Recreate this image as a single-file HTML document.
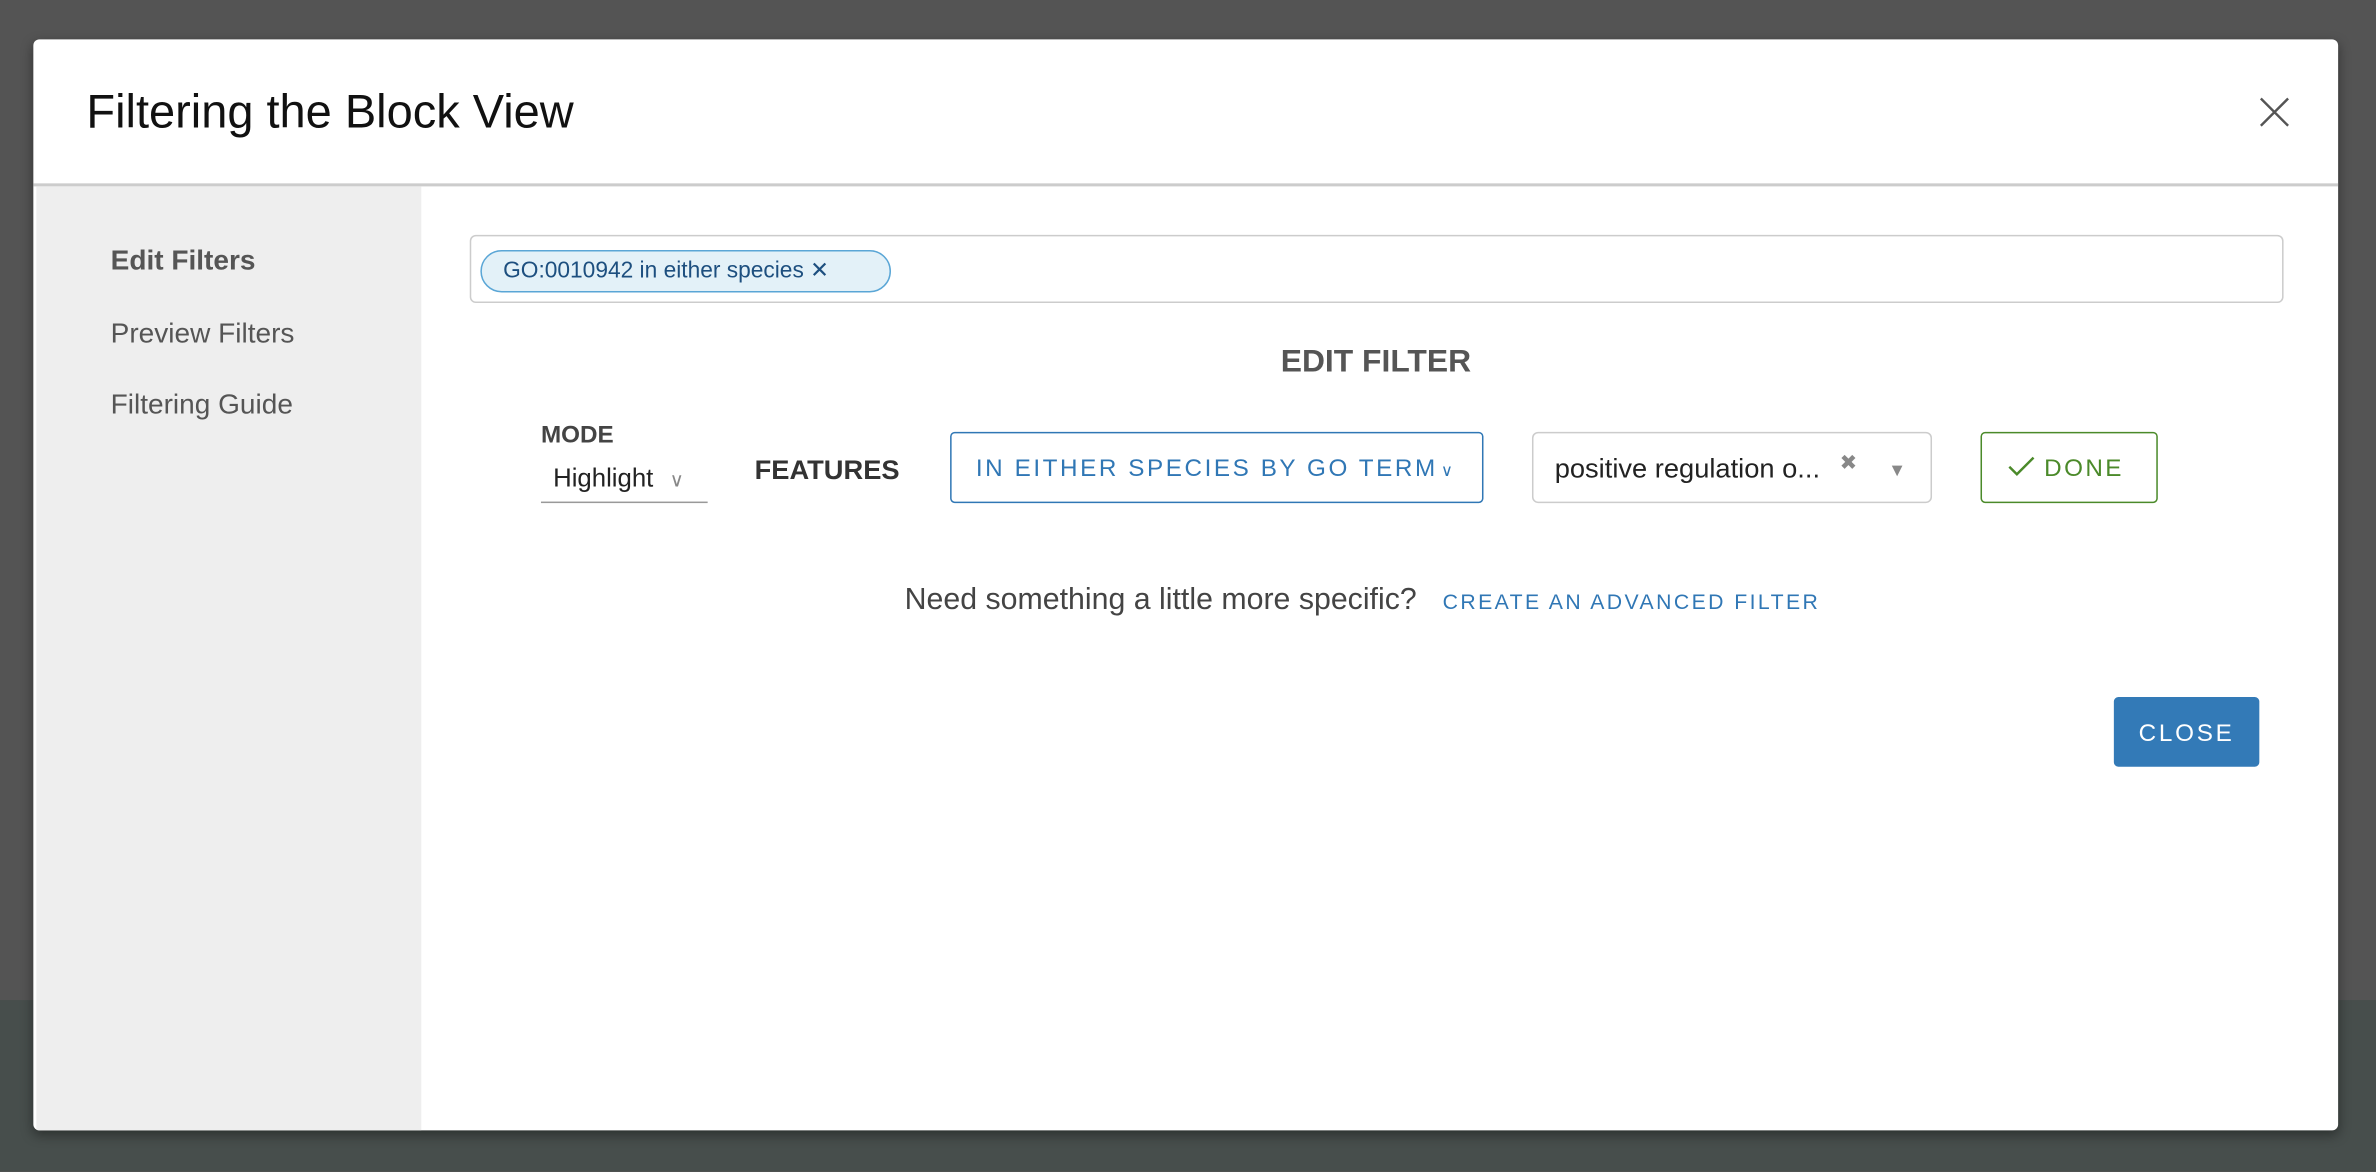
<!DOCTYPE html>
<html><head><meta charset="utf-8"><style>
html,body{margin:0;padding:0;width:2376px;height:1172px;overflow:hidden;background:#545454;font-family:"Liberation Sans",sans-serif}
#w{position:absolute;left:0;top:0;width:1568px;height:773px;transform:scale(1.51531);transform-origin:0 0}
.a{position:absolute}
</style></head><body><div id="w">
<div class="a" style="left:0;top:660px;width:1568px;height:113px;background:#474e4c"></div>
<div class="a" style="left:22px;top:26px;width:1521px;height:720px;background:#fff;border-radius:4px;overflow:hidden;box-shadow:0 3px 8px rgba(0,0,0,.4)">
  <div class="a" style="left:35px;top:30px;font-size:31px;color:#111">Filtering the Block View</div>
  <svg class="a" style="left:1468px;top:37px" width="22" height="22" viewBox="0 0 22 22"><path d="M2 2L20 20M20 2L2 20" stroke="#555" stroke-width="1.6" fill="none"/></svg>
  <div class="a" style="left:0;top:95px;width:1521px;height:2px;background:#ccc"></div>
  <div class="a" style="left:2px;top:97px;width:254px;height:623px;background:#eee"></div>
  <div class="a" style="left:51px;top:135px;font-size:18.5px;color:#555;font-weight:bold">Edit Filters</div>
  <div class="a" style="left:51px;top:183px;font-size:18.5px;color:#555">Preview Filters</div>
  <div class="a" style="left:51px;top:230px;font-size:18.5px;color:#555">Filtering Guide</div>
  <div class="a" style="left:288px;top:129px;width:1197px;height:45px;border:1.5px solid #ccc;border-radius:4px;box-sizing:border-box"></div>
  <div class="a" style="left:295px;top:139px;border:1.5px solid #5aa6d6;background:#e3f1f8;border-radius:14px;font-size:15px;color:#1d4f7f;line-height:26px;padding-left:14px;box-sizing:border-box;width:271px;height:28px">GO:0010942 in either species &#x2715;</div>
  <div class="a" style="left:0;top:201px;width:1772px;text-align:center;font-size:21px;font-weight:bold;color:#555">EDIT FILTER</div>
  <div class="a" style="left:335px;top:253px;font-size:16px;font-weight:bold;color:#444">MODE</div>
  <div class="a" style="left:335px;top:280px;width:110px;height:26px;border-bottom:1.5px solid #999;font-size:17px;color:#222;padding-left:8px;box-sizing:border-box">Highlight <span style="color:#888;font-size:13px;margin-left:6px">&#x2228;</span></div>
  <div class="a" style="left:476px;top:274px;font-size:18px;font-weight:bold;color:#333">FEATURES</div>
  <div class="a" style="left:605px;top:259px;width:352px;height:47px;border:1.5px solid #3077b5;border-radius:3px;box-sizing:border-box;color:#3077b5;font-size:16px;letter-spacing:1.7px;line-height:48px;padding-left:16px">IN EITHER SPECIES BY GO TERM<span style="font-size:11px;margin-left:2px">&#x2228;</span></div>
  <div class="a" style="left:989px;top:259px;width:264px;height:47px;border:1.5px solid #ccc;border-radius:4px;box-sizing:border-box;font-size:18px;color:#222;line-height:47px;padding-left:14px">positive regulation o...<span style="color:#888;font-size:14px;position:absolute;left:202px;top:-4px">&#x2716;</span><span style="color:#888;font-size:12px;position:absolute;left:234px;top:1px">&#x25BC;</span></div>
  <div class="a" style="left:1285px;top:259px;width:117px;height:47px;border:1.5px solid #4b8a2a;border-radius:3px;box-sizing:border-box;color:#4b8a2a;font-size:16px;letter-spacing:1.6px;line-height:48px;padding-left:17px"><svg width="18" height="14" viewBox="0 0 18 14" style="vertical-align:-1px;margin-right:6px"><path d="M1 7L6 12L17 1" stroke="#4b8a2a" stroke-width="1.6" fill="none"/></svg>DONE</div>
  <div class="a" style="left:575px;top:359px;font-size:20px;color:#444">Need something a little more specific?</div>
  <div class="a" style="left:930px;top:363px;font-size:14px;color:#3077b5;letter-spacing:1.6px">CREATE AN ADVANCED FILTER</div>
  <div class="a" style="left:1373px;top:434px;width:96px;height:46px;background:#337ab7;border-radius:3px;color:#fff;font-size:16px;letter-spacing:1.8px;text-align:center;line-height:50px">CLOSE</div>
</div>
</div></body></html>
